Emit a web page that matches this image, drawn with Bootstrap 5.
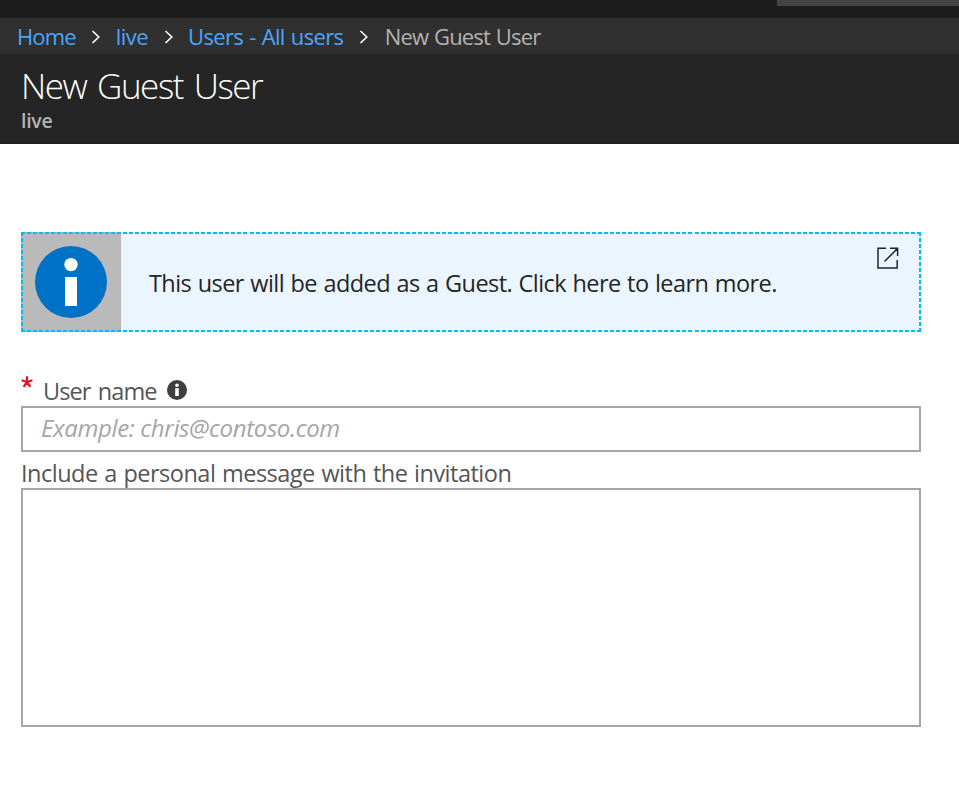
<!DOCTYPE html>
<html lang="en">
<head>
<meta charset="utf-8">
<meta name="viewport" content="width=device-width, initial-scale=1">
<title>New Guest User</title>
<link href="https://cdn.jsdelivr.net/npm/bootstrap@5.3.0/dist/css/bootstrap.min.css" rel="stylesheet">
<style>
body { font-family: "Open Sans", "Noto Sans", sans-serif; color: #252525; background: #fff; overflow: hidden; }
.top-strip { height: 18px; background: #1d1d1d; }
.top-search { width: 182px; height: 6px; background: #444; }
.crumb-bar { height: 36px; background: #303030; padding-left: 17px; }
.crumb-bar .breadcrumb { font-size: 22px; line-height: 36px; color: #b3b3b3; white-space: nowrap; flex-wrap: nowrap; letter-spacing: -.5px; }
.crumb-bar a { color: #4ba6ff; }
.crumb-bar .crumb-home { letter-spacing: -.85px; }
.crumb-bar .crumb-users { letter-spacing: -.65px; word-spacing: 1px; }
.crumb-here { letter-spacing: -.85px; word-spacing: 1px; padding-left: 1.5px; }
.chev { width: 10px; height: 16px; margin: 2px 14.4px 0 15.5px; flex: none; }
.blade-head { height: 90px; background: #252525; padding: 11px 0 0 21px; border-bottom: 2px solid #222; }
.blade-title { font-size: 35px; line-height: 42px; font-weight: 300; color: #fff; letter-spacing: -1.45px; word-spacing: 3px; }
.blade-sub { font-size: 19.5px; line-height: 22px; margin-top: 3px; font-weight: 600; color: #b3b3b3; letter-spacing: -.3px; }
.form-area { padding: 88px 38px 0 21px; }
.info-box { height: 100px; background: #ebf5ff; color: #252525; }
/* 4px dashes with 2px gaps on each edge */
.info-box::after {
  content: ""; position: absolute; inset: 0; pointer-events: none;
  --h: repeating-linear-gradient(90deg, #00bcf2 0 4px, transparent 4px 6.0134px);
  --v: repeating-linear-gradient(180deg, #00bcf2 0 4px, transparent 4px 6px);
  background: var(--h) 0 0 / 100% 2px no-repeat, var(--h) 0 100% / 100% 2px no-repeat,
    var(--v) 0 0 / 2px 100% no-repeat, var(--v) 100% 0 / 2px 100% no-repeat;
}
.info-icon { width: 100px; background: #bababa; padding-left: 14px; }
.info-text { font-size: 23.5px; line-height: 32px; padding: 35px 0 0 28px; white-space: nowrap; letter-spacing: -.58px; word-spacing: 1px; }
.popout { margin: 15px 22px 0 0; }
.field-label { font-size: 23.5px; line-height: 32px; color: #555; white-space: nowrap; letter-spacing: -.5px; word-spacing: 1px; }
.row-user { height: 32px; margin-top: 42px; }
.row-user .field-label { padding-top: 1px; letter-spacing: -.9px; word-spacing: 2px; }
.star { width: 12px; height: 12px; margin: 2px 10px 0 0; }
.label-info { margin: 6px 0 0 10px; }
.field-box { border: 2px solid #a6a6a6; border-radius: 0; font-size: 24px; color: #555; }
.field-box::placeholder { color: #a6a6a6; font-style: italic; opacity: 1; }
.user-input { height: 46px; padding: 0 18px 3px; letter-spacing: -.36px; }
.msg-input { height: 239px; resize: none; }
.row-msg { height: 36px; padding-top: 5px; }
</style>
</head>
<body>
<div class="top-strip d-flex justify-content-end"><div class="top-search"></div></div>
<nav class="crumb-bar" aria-label="breadcrumb">
  <div class="breadcrumb d-flex align-items-center m-0">
    <a class="crumb-home text-decoration-none" href="#">Home</a>
    <svg class="chev" viewBox="0 0 10 16" fill="none" stroke="#fff" stroke-width="1.6"><path d="M1.5 2 7.8 8 1.5 14"/></svg>
    <a class="text-decoration-none" href="#">live</a>
    <svg class="chev" viewBox="0 0 10 16" fill="none" stroke="#fff" stroke-width="1.6"><path d="M1.5 2 7.8 8 1.5 14"/></svg>
    <a class="crumb-users text-decoration-none" href="#">Users - All users</a>
    <svg class="chev" viewBox="0 0 10 16" fill="none" stroke="#fff" stroke-width="1.6"><path d="M1.5 2 7.8 8 1.5 14"/></svg>
    <span class="crumb-here">New Guest User</span>
  </div>
</nav>
<header class="blade-head">
  <h1 class="blade-title m-0">New Guest User</h1>
  <div class="blade-sub">live</div>
</header>
<main class="form-area">
  <div class="info-box position-relative d-flex">
    <div class="info-icon d-flex align-items-center flex-shrink-0">
      <svg width="72" height="72" viewBox="0 0 72 72"><circle cx="36" cy="36" r="36" fill="#0072c6"/><circle cx="36" cy="18.6" r="6.7" fill="#fff"/><path fill="#fff" d="M30 31h12v29H30z"/></svg>
    </div>
    <div class="info-text flex-grow-1">This user will be added as a Guest. Click here to learn more.</div>
    <svg class="popout flex-shrink-0" width="22" height="22" viewBox="0 0 22 22" fill="none" stroke="#252525" stroke-width="1.5"><path d="M9 1.2H1v19.8h19.2V13M13 1.2h7.6V9M7.5 14.5 20 2"/><path d="M17 1h4v4z" fill="#252525" stroke="none"/></svg>
  </div>
  <div class="row-user d-flex align-items-start">
    <svg class="star" viewBox="0 0 12 12" stroke="#e81123" stroke-width="2.2" fill="none"><path d="M6 6V.3M6 6 .6 4.3M6 6l5.4-1.7M6 6l-3.4 4.8M6 6l3.4 4.8"/></svg>
    <label class="field-label" for="user">User name</label>
    <svg class="label-info" width="20" height="20" viewBox="0 0 20 20"><circle cx="10" cy="10" r="10" fill="#3f3f3f"/><circle cx="10" cy="5.2" r="1.8" fill="#fff"/><path fill="#fff" d="M8.2 8.2h3.6V16H8.2z"/></svg>
  </div>
  <input id="user" class="form-control field-box user-input" type="text" placeholder="Example: chris@contoso.com">
  <div class="row-msg"><label class="field-label" for="msg">Include a personal message with the invitation</label></div>
  <textarea id="msg" class="form-control field-box msg-input"></textarea>
</main>
<script src="https://cdn.jsdelivr.net/npm/bootstrap@5.3.0/dist/js/bootstrap.bundle.min.js"></script>
</body>
</html>
